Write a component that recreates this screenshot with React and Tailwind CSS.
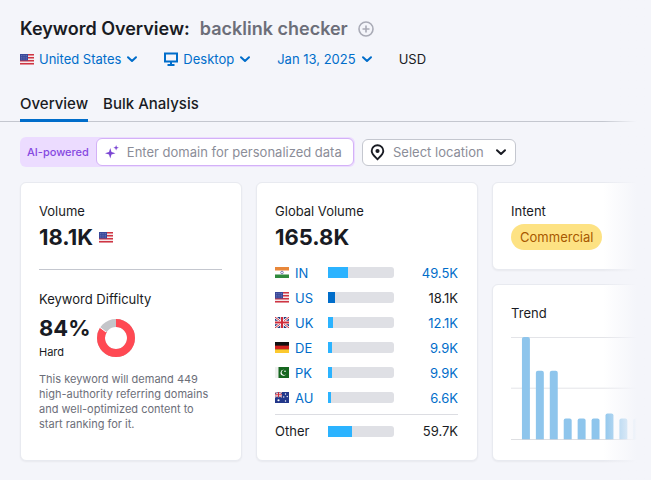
import { Fragment } from "react";

const countries = [
  { code: "IN", volume: "49.5K", share: 30 },
  { code: "US", volume: "18.1K", share: 10, current: true },
  { code: "UK", volume: "12.1K", share: 7 },
  { code: "DE", volume: "9.9K", share: 6 },
  { code: "PK", volume: "9.9K", share: 6 },
  { code: "AU", volume: "6.6K", share: 4 },
];

const trend = [103, 69, 69, 21, 21, 21, 26, 21, 21, 21, 26, 21];

function UnionJack() {
  return (
    <Fragment>
      <rect width="28" height="22" fill="#1f3a7d" />
      <path d="M0 0L28 22M28 0L0 22" stroke="#fff" strokeWidth="5" />
      <path d="M0 0L28 22M28 0L0 22" stroke="#cf2b3a" strokeWidth="2" />
      <path d="M14 0V22M0 11H28" stroke="#fff" strokeWidth="7" />
      <path d="M14 0V22M0 11H28" stroke="#cf2b3a" strokeWidth="4" />
    </Fragment>
  );
}

const flags = {
  IN: (
    <Fragment>
      <rect width="28" height="22" fill="#fff" />
      <rect width="28" height="7" fill="#e8873a" />
      <rect y="15" width="28" height="7" fill="#2f8a3c" />
      <circle cx="14" cy="11" r="2.6" fill="none" stroke="#4a5296" strokeWidth="1.4" />
    </Fragment>
  ),
  US: (
    <Fragment>
      <rect width="28" height="22" fill="#f4e8ea" />
      <path d="M0 1.5H28M0 7.5H28M0 13.5H28M0 19.5H28" stroke="#cf3543" strokeWidth="3" />
      <rect width="16" height="13" fill="#39489a" />
      <path d="M2 3H15M2 6.5H15M2 10H15" stroke="#a5aedb" strokeWidth="1" strokeDasharray="1.5 2" />
    </Fragment>
  ),
  UK: <UnionJack />,
  DE: (
    <Fragment>
      <rect width="28" height="22" fill="#111" />
      <rect y="7.3" width="28" height="7.4" fill="#d3231f" />
      <rect y="14.6" width="28" height="7.4" fill="#fcc92e" />
    </Fragment>
  ),
  PK: (
    <Fragment>
      <rect width="28" height="22" fill="#15661f" />
      <rect width="7" height="22" fill="#eef0ee" />
      <path d="M18 5.5A6 6 0 1 0 22.5 14A5.2 5.2 0 1 1 18 5.5Z" fill="#fff" />
      <circle cx="20" cy="8.5" r="1.6" fill="#fff" />
    </Fragment>
  ),
  AU: (
    <Fragment>
      <rect width="28" height="22" fill="#22378a" />
      <svg width="14" height="11" viewBox="0 0 28 22">
        <UnionJack />
      </svg>
      <circle cx="7" cy="16.5" r="2.2" fill="#fff" />
      <circle cx="21" cy="4" r="1.3" fill="#fff" />
      <circle cx="17.5" cy="10" r="1.3" fill="#fff" />
      <circle cx="24.5" cy="9" r="1.3" fill="#fff" />
      <circle cx="21" cy="18" r="1.4" fill="#fff" />
    </Fragment>
  ),
};

function Flag({ code }) {
  return (
    <svg viewBox="0 0 28 22" className="w-[14px] h-[11px] shrink-0" aria-hidden="true">
      {flags[code]}
    </svg>
  );
}

function Chevron() {
  return (
    <svg viewBox="0 0 12 12" className="w-3 h-3 shrink-0" fill="none" stroke="currentColor" strokeWidth="2" strokeLinecap="round" strokeLinejoin="round" aria-hidden="true">
      <path d="M2 4.2L6 8L10 4.2" />
    </svg>
  );
}

function FilterButton({ icon, children }) {
  return (
    <button type="button" className="flex items-center gap-[5px] text-[#006dca]">
      {icon}
      <span>{children}</span>
      <Chevron />
    </button>
  );
}

function Bar({ share, current }) {
  return (
    <div className="w-[66px] h-[11px] bg-[#dfe0e5] rounded-r-[3px] overflow-hidden">
      <div className={current ? "h-full bg-[#006dca]" : "h-full bg-[#2bb3ff]"} style={{ width: `${share}%` }} />
    </div>
  );
}

function Card({ className = "", children }) {
  return (
    <section className={`bg-white rounded-md pl-[18px] pr-[19px] border border-[#e8eaf0] shadow-xs ${className}`}>
      {children}
    </section>
  );
}

function TrendChart() {
  return (
    <svg viewBox="0 0 184 106" className="block w-full mt-3" role="img" aria-label="Trend">
      <path d="M0 2.5H184M0 53.5H184" stroke="#e3e4e8" />
      {trend.map((h, i) => (
        <path
          key={i}
          d={`M${11 + i * 14} 105V${107 - h}q0 -2 2 -2h4q2 0 2 2V105z`}
          fill="#8ec5ec"
        />
      ))}
      <path d="M0 105.5H184" stroke="#c4c6cc" />
    </svg>
  );
}

export default function App() {
  return (
    <main className="relative min-h-screen overflow-hidden bg-[#f4f5fa] font-['Inter',sans-serif] text-[13px] leading-5 text-[#191b23]">
      <header className="px-5 pt-[17px]">
        <h1 className="flex items-center text-lg leading-6 font-semibold">
          Keyword Overview:
          <span className="ml-[10px] text-[#6c6e79]">backlink checker</span>
          <button type="button" aria-label="Add keyword" className="ml-[10px] text-[#a9abb6]">
            <svg viewBox="0 0 16 16" className="w-4 h-4" fill="none" stroke="currentColor" strokeWidth="1.6">
              <circle cx="8" cy="8" r="7" />
              <path d="M8 4.5V11.5M4.5 8H11.5" />
            </svg>
          </button>
        </h1>
        <div className="flex items-center gap-[26px] mt-[6px] h-6">
          <FilterButton icon={<Flag code="US" />}>United States</FilterButton>
          <FilterButton
            icon={
              <svg viewBox="0 0 14 14" className="w-[14px] h-[14px]" fill="none" stroke="currentColor" strokeWidth="2" aria-hidden="true">
                <path d="M1 1.5H13V9.5H1ZM7 10V13M3.5 13H10.5" />
              </svg>
            }
          >
            Desktop
          </FilterButton>
          <FilterButton>Jan 13, 2025</FilterButton>
          <span>USD</span>
        </div>
      </header>

      <nav className="flex gap-[15px] mt-[19px] px-5 border-b border-[#c4c7cf] text-[15px] font-medium">
        <a href="#overview" aria-current="page" className="-mb-px pt-1 pb-[5px] border-b-3 border-[#006dca]">
          Overview
        </a>
        <a href="#bulk" className="pt-1">
          Bulk Analysis
        </a>
      </nav>

      <form className="flex items-center gap-[7px] mt-[15px] px-5">
        <div className="flex items-center w-[335px] h-[30px] pr-px rounded-md bg-[#ecdcff]">
          <label htmlFor="domain" className="px-[7px] text-[11px] font-medium text-[#8649e1] whitespace-nowrap">
            AI-powered
          </label>
          <div className="flex flex-1 items-center gap-2 h-7 pl-2 pr-1 rounded-md border border-[#d3b1f7] bg-white">
            <svg viewBox="0 0 16 16" className="w-[14px] h-[14px] shrink-0" fill="#7b46d3" aria-hidden="true">
              <path d="M6 3.5L7.4 8.1L12 9.5L7.4 10.9L6 15.5L4.6 10.9L0 9.5L4.6 8.1Z" />
              <path d="M12.7 0L13.5 2.3L15.8 3.1L13.5 3.9L12.7 6.2L11.9 3.9L9.6 3.1L11.9 2.3Z" />
            </svg>
            <input id="domain" type="text" placeholder="Enter domain for personalized data" className="w-full min-w-0 outline-none placeholder:text-[#8b8d98]" />
          </div>
        </div>
        <div className="relative flex items-center">
          <svg viewBox="0 0 16 18" className="absolute left-2 w-[15px] h-[17px]" fill="none" stroke="#191b23" strokeWidth="2" aria-hidden="true">
            <path d="M8 16.2C5 13.2 1.8 10.8 1.8 7.4A6.2 6.2 0 0 1 14.2 7.4C14.2 10.8 11 13.2 8 16.2Z" />
            <circle cx="8" cy="7.4" r="1.2" fill="#191b23" />
          </svg>
          <select aria-label="Location" className="appearance-none w-[154px] h-[27px] pl-[30px] rounded-md border border-[#c4c7cf] bg-white text-[#8b8d98]">
            <option>Select location</option>
          </select>
          <span className="absolute right-[9px] pointer-events-none">
            <Chevron />
          </span>
        </div>
      </form>

      <div className="pl-5 mt-[15px] pb-5">
        <div className="grid grid-cols-3 gap-[14px] w-[110%]">
          <Card className="pt-[18px] pb-7">
            <h2>Volume</h2>
            <div className="flex items-center gap-[6px] mt-[2px] text-[22px] leading-7 font-bold">
              18.1K
              <Flag code="US" />
            </div>
            <hr className="mt-[18px] border-[#c4c7cf]" />
            <h2 className="mt-[19px]">Keyword Difficulty</h2>
            <div className="flex items-center gap-[6px] mt-[7px]">
              <div>
                <div className="text-[22px] leading-6 font-bold">84%</div>
                <div className="mt-1 text-[11px] leading-4">Hard</div>
              </div>
              <svg viewBox="0 0 38 38" className="w-[38px] h-[38px]" fill="none" strokeWidth="8" role="img" aria-label="84%">
                <circle cx="19" cy="19" r="15" stroke="#c4c5c9" />
                <circle cx="19" cy="19" r="15" stroke="#ff4953" pathLength="100" strokeDasharray="84 100" transform="rotate(-90 19 19)" />
                <path d="M3 8.5L9 13" stroke="#fff" strokeWidth="1" />
              </svg>
            </div>
            <p className="mt-3 pr-2 text-[11px] leading-[15px] text-[#6c6e79]">
              This keyword will demand 449 high-authority referring domains and well-optimized content to start ranking for it.
            </p>
          </Card>

          <Card className="pt-[18px]">
            <h2>Global Volume</h2>
            <div className="mt-[2px] text-[22px] leading-7 font-bold">165.8K</div>
            <table className="w-full mt-[9px] border-collapse">
              <tbody>
                {countries.map(({ code, volume, share, current }) => (
                  <tr key={code} className="h-[25px] text-[#006dca]">
                    <th scope="row" className="p-0 w-[53px] font-normal">
                      <a href={`#${code}`} className="flex items-center gap-[6px]">
                        <Flag code={code} />
                        {code}
                      </a>
                    </th>
                    <td className="p-0">
                      <Bar share={share} current={current} />
                    </td>
                    <td className={current ? "p-0 text-right text-[#191b23]" : "p-0 text-right"}>{volume}</td>
                  </tr>
                ))}
                <tr className="h-1" />
              </tbody>
              <tfoot>
                <tr className="h-[34px] border-t border-[#dcdde2]">
                  <th scope="row" className="p-0 text-left font-normal">Other</th>
                  <td className="p-0">
                    <Bar share={36} />
                  </td>
                  <td className="p-0 text-right">59.7K</td>
                </tr>
              </tfoot>
            </table>
          </Card>

          <div className="flex flex-col gap-[14px]">
            <Card className="pt-[18px] pb-[19px]">
              <h2>Intent</h2>
              <span className="inline-block mt-[3px] px-[9px] rounded-full bg-[#fde283] leading-[26px] text-[#a75800]">Commercial</span>
            </Card>
            <Card className="flex-1 pt-[18px]">
              <h2>Trend</h2>
              <TrendChart />
            </Card>
          </div>
        </div>
      </div>

      {/* fades the overflowing column into the page background */}
      <div className="absolute inset-y-0 right-0 w-12 pointer-events-none bg-linear-to-r from-transparent to-[#f4f5fa] to-70%" />
    </main>
  );
}
